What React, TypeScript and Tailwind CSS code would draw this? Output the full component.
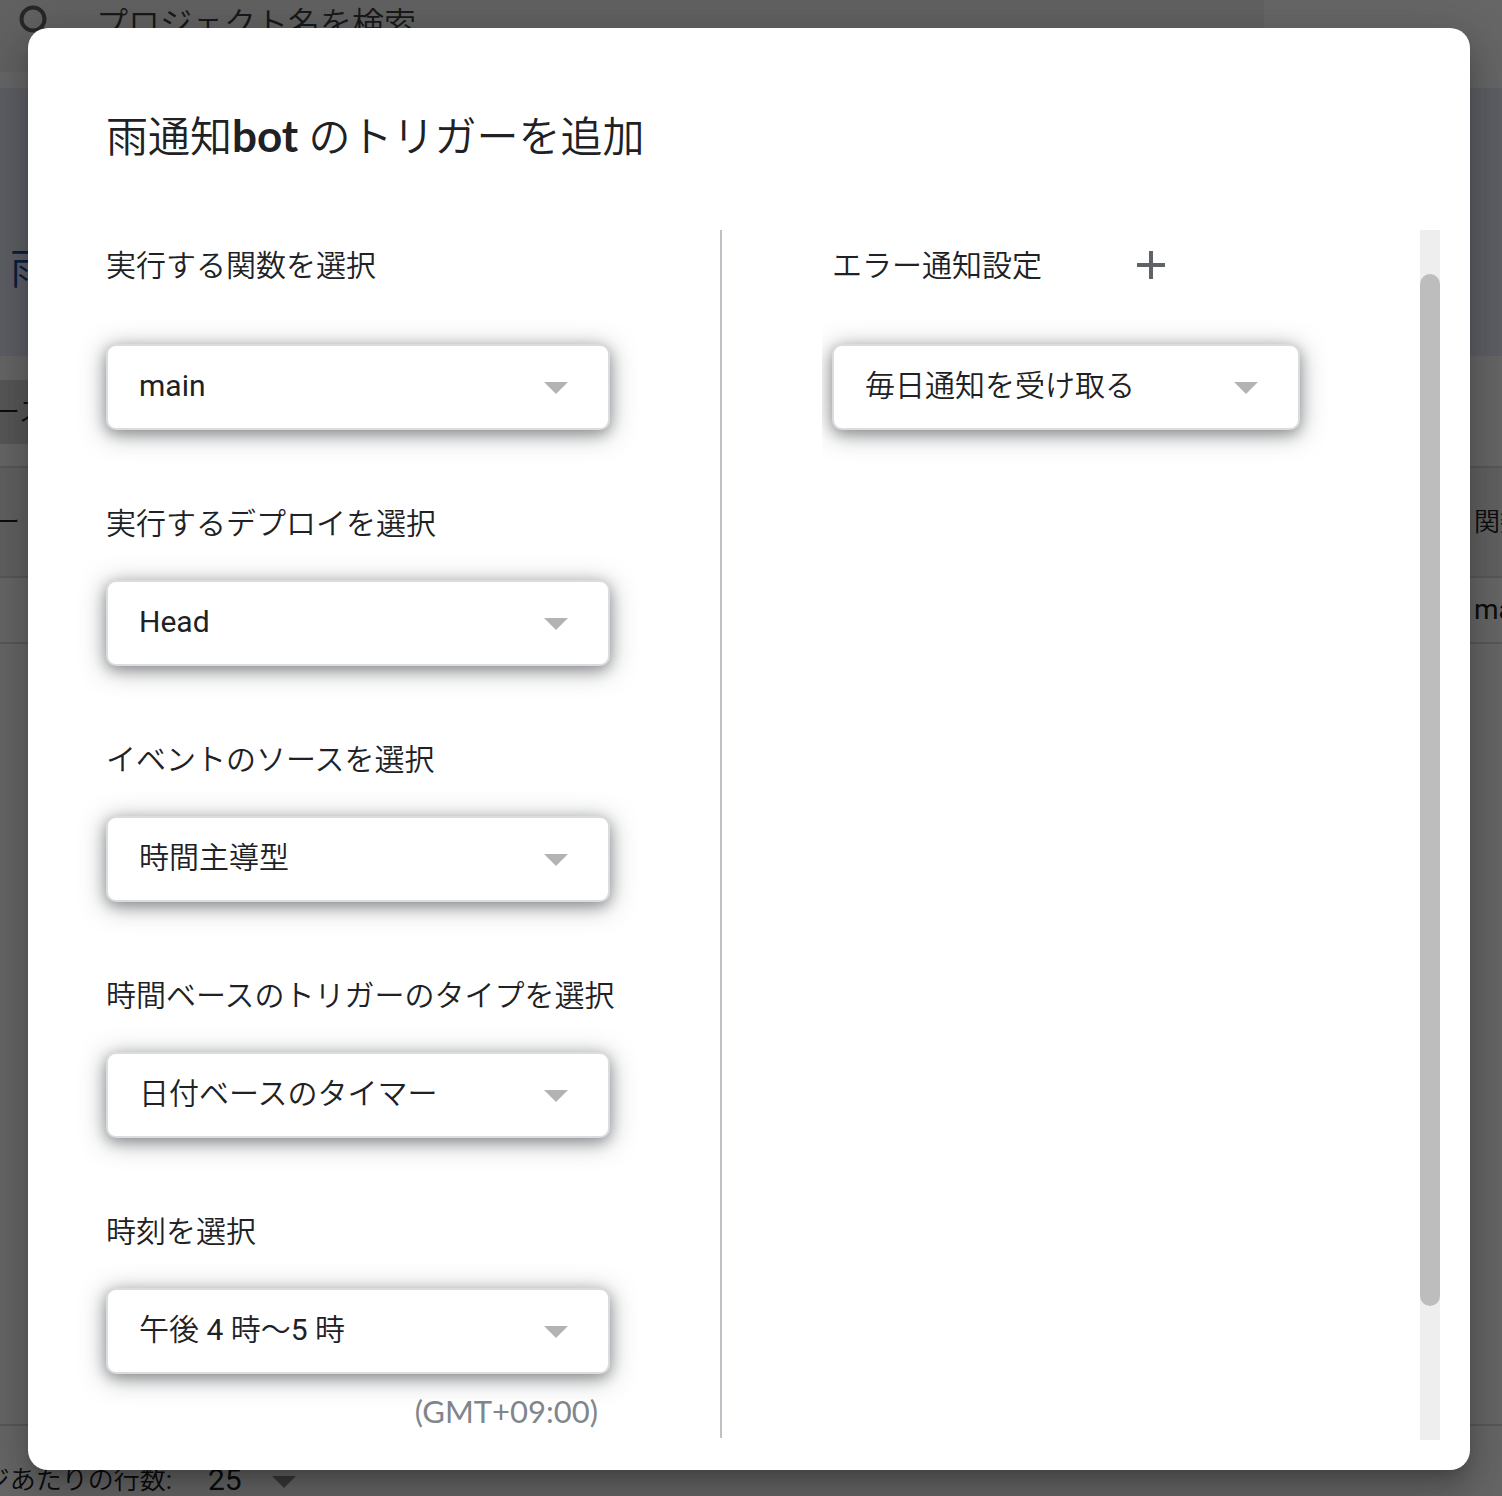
import { useId } from 'react';
import type { ReactNode } from 'react';
import { MdAdd } from 'react-icons/md';

function Caret({ className }: { className: string }) {
  return (
    <svg viewBox="0 0 24 12" aria-hidden="true" className={`h-3 w-6 pointer-events-none ${className}`}>
      <path d="M0 0h24L12 12z" fill="currentColor" />
    </svg>
  );
}

function Dropdown({ id, value }: { id: string; value: string }) {
  return (
    <div className="relative">
      <select
        id={id}
        defaultValue={value}
        className="block w-full h-[86px] appearance-none rounded-[10px] border-2 border-[#dadce0] bg-white pl-[31px] pr-20 pb-1 text-[30px] text-[#202124] shadow-[0_4px_12px_rgba(60,64,67,.3),0_4px_24px_rgba(60,64,67,.5)]"
      >
        <option>{value}</option>
      </select>
      <Caret className="absolute right-[42px] top-[38px] text-[#b3b3b3]" />
    </div>
  );
}

// first field of each column sits in a taller header row
function Field({ label, value, first, action }: { label: string; value: string; first?: boolean; action?: ReactNode }) {
  const id = useId();

  return (
    <div className={first ? '' : 'mt-[58px]'}>
      <div className={`flex h-[70px] items-center whitespace-nowrap ${first ? 'mb-11' : 'mb-[22px]'}`}>
        <label htmlFor={id} className="text-[30px]">
          {label}
        </label>
        {action}
      </div>
      <Dropdown id={id} value={value} />
    </div>
  );
}

function ProjectPage() {
  return (
    <div className="[grid-area:1/1] flex flex-col overflow-hidden bg-white whitespace-nowrap text-[26px] text-[#202124]">
      <div className="mb-4 mr-[238px] flex h-[72px] items-start bg-[#f3f3f3]">
        <svg viewBox="0 0 32 32" aria-hidden="true" className="ml-[18px] mt-1 size-8 shrink-0 text-[#5f6368]">
          <circle cx="15" cy="15" r="11.5" fill="none" stroke="currentColor" strokeWidth="4" />
          <path d="M23 23l8 8" stroke="currentColor" strokeWidth="4" />
        </svg>
        <input
          type="search"
          aria-label="プロジェクト名を検索"
          placeholder="プロジェクト名を検索"
          className="ml-[46px] h-12 flex-1 bg-transparent text-[32px] placeholder:text-[#3c4043]"
        />
      </div>

      <div className="h-[268px] bg-[#e8eefc] pl-2.5 pt-[152px] text-[42px] leading-[60px] text-[#174ea6]">雨</div>

      <div className="mt-6 flex h-16 w-60 items-center bg-[#dadada]">
        <span className="-ml-1.5">ース</span>
      </div>

      <div className="mt-[22px] flex h-28 items-center justify-between border-y-2 border-[#dadce0] bg-[#f3f3f3]">
        <span className="-ml-1.5">ー</span>
        <span className="w-7">関数</span>
      </div>
      <div className="flex h-[66px] items-center justify-end border-b-2 border-[#dadce0]">
        <span className="w-7 text-[28px]">main</span>
      </div>

      <div className="flex-1" />

      <div className="flex h-[72px] items-end border-t-2 border-[#dadce0] leading-8">
        <label htmlFor="rows" className="flex w-[172px] justify-end">
          ページあたりの行数:
        </label>
        <div className="relative ml-9">
          <select id="rows" defaultValue="25" className="block h-8 w-24 appearance-none text-[30px] leading-8">
            <option>25</option>
          </select>
          <Caret className="absolute right-2 top-3 text-[#8f8f8f]" />
        </div>
      </div>
    </div>
  );
}

export default function App() {
  return (
    <div
      lang="ja"
      className="grid min-h-screen grid-cols-[minmax(0,1fr)] overflow-hidden font-[Roboto,'Noto_Sans_CJK_JP_DemiLight','Noto_Sans_CJK_JP',sans-serif]"
    >
      <ProjectPage />

      <div className="[grid-area:1/1] z-10 bg-black/60 pb-[26px] pl-7 pr-8 pt-7">
        <div
          role="dialog"
          aria-labelledby="dialog-title"
          className="rounded-[20px] bg-white pb-[30px] text-[#202124] shadow-[0_11px_15px_-7px_rgba(0,0,0,.2),0_24px_38px_3px_rgba(0,0,0,.14),0_9px_46px_8px_rgba(0,0,0,.12)]"
        >
          <h1 id="dialog-title" className="px-[78px] pb-[62px] pt-20 text-[42px] leading-[60px]">
            雨通知<span className="font-[Lato] text-[44px] leading-none font-bold">bot</span> のトリガーを追加
          </h1>

          <div className="flex pr-[30px]">
            <div className="grid flex-1 grid-cols-[694px_minmax(0,1fr)] pb-0.5">
              <div className="border-r-2 border-[#bdc1c6] pb-1.5 pl-[78px] pr-[110px]">
                <Field first label="実行する関数を選択" value="main" />
                <Field label="実行するデプロイを選択" value="Head" />
                <Field label="イベントのソースを選択" value="時間主導型" />
                <Field label="時間ベースのトリガーのタイプを選択" value="日付ベースのタイマー" />
                <Field label="時刻を選択" value="午後 4 時〜5 時" />
                <p className="mt-4 pr-3 text-right font-[Lato] text-[31px] leading-[42px] text-[#80868b]">(GMT+09:00)</p>
              </div>

              <div className="ml-[100px] overflow-hidden pl-2.5 pr-[120px]">
                <Field
                  first
                  label="エラー通知設定"
                  value="毎日通知を受け取る"
                  action={
                    <button type="button" aria-label="通知を追加" className="ml-[85px] text-[#5f6368]">
                      <MdAdd className="size-12" />
                    </button>
                  }
                />
              </div>
            </div>

            {/* Scrollbar */}
            <div className="w-5 shrink-0 bg-[#eee] pt-11">
              <div className="h-[1032px] rounded-full bg-[#bdbdbd]" />
            </div>
          </div>
        </div>
      </div>
    </div>
  );
}
